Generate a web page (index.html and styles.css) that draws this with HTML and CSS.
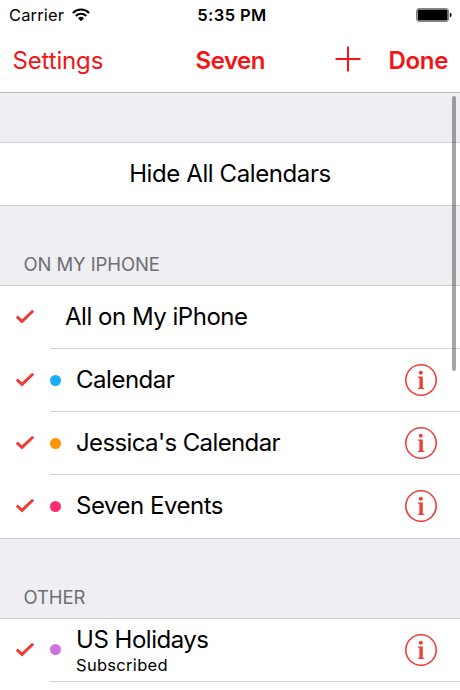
FILE: index.html
```
<!DOCTYPE html>
<html>

<head>
  <meta charset="utf-8">
  <title>Seven</title>
  <link rel="stylesheet" href="styles.css">
</head>

<body>
  <svg class="defs" width="0" height="0">
    <symbol id="check" viewBox="0 0 20 16">
      <path d="M1.8 7.6 L7 12.4 L18.2 1.8" fill="none" stroke="#f23a34" stroke-width="2.9"/>
    </symbol>
    <symbol id="info" viewBox="0 0 34 34">
      <circle cx="17" cy="17" r="15.2" fill="none" stroke="#ee3e38" stroke-width="1.6"/>
      <circle cx="16.8" cy="9.7" r="2" fill="#ee3e38"/>
      <path d="M14 13.6 H18.8 V24.8 L20.3 25.1 V26.1 H13.9 V25.1 L15.4 24.8 V15 L14 14.6 Z" fill="#ee3e38"/>
    </symbol>
  </svg>

  <header class="header">
    <div class="status">
      <div class="carrier">
        <span>Carrier</span>
        <svg class="wifi" width="18" height="14" viewBox="0 0 18 14">
          <g fill="none" stroke="#000" stroke-width="2.1">
            <path d="M0.9 4.9 A11.5 11.5 0 0 1 17.1 4.9"/>
            <path d="M3.8 7.9 A7.4 7.4 0 0 1 14.2 7.9"/>
          </g>
          <path d="M9 13.2 L6 10.2 A4.3 4.3 0 0 1 12 10.2 Z"/>
        </svg>
      </div>
      <div class="time">5:35 PM</div>
      <svg class="battery" width="36" height="14" viewBox="0 0 36 14">
        <rect x="0.6" y="0.6" width="32" height="12.8" rx="2.2" fill="none" stroke="#777" stroke-width="1"/>
        <rect x="1.6" y="1.6" width="30" height="10.8" rx="1.2"/>
        <path d="M33.9 4.6 Q35.6 5.2 35.6 7 Q35.6 8.8 33.9 9.4 Z"/>
      </svg>
    </div>
    <div class="nav">
      <a class="settings">Settings</a>
      <h1 class="title">Seven</h1>
      <div class="actions">
        <svg class="add" width="26" height="26" viewBox="0 0 26 26">
          <path d="M0.5 13 H25.5 M13 0.5 V25.5" stroke="#f51414" stroke-width="2"/>
        </svg>
        <a class="done">Done</a>
      </div>
    </div>
  </header>

  <div class="content">
    <div class="list first">
      <div class="row button"><span class="name">Hide All Calendars</span></div>
    </div>

    <h2 class="group">ON MY IPHONE</h2>
    <div class="list phone">
      <div class="row">
        <svg class="check"><use href="#check"/></svg>
        <div class="cell all"><span class="name">All on My iPhone</span></div>
      </div>
      <div class="row">
        <svg class="check"><use href="#check"/></svg>
        <div class="cell">
          <i class="dot blue"></i>
          <span class="name">Calendar</span>
          <svg class="info"><use href="#info"/></svg>
        </div>
      </div>
      <div class="row">
        <svg class="check"><use href="#check"/></svg>
        <div class="cell">
          <i class="dot orange"></i>
          <span class="name tight">Jessica's Calendar</span>
          <svg class="info"><use href="#info"/></svg>
        </div>
      </div>
      <div class="row">
        <svg class="check"><use href="#check"/></svg>
        <div class="cell">
          <i class="dot pink"></i>
          <span class="name">Seven Events</span>
          <svg class="info"><use href="#info"/></svg>
        </div>
      </div>
    </div>

    <h2 class="group">OTHER</h2>
    <div class="list other">
      <div class="row">
        <svg class="check"><use href="#check"/></svg>
        <div class="cell">
          <i class="dot purple"></i>
          <div class="text">
            <span class="name">US Holidays</span>
            <small class="sub">Subscribed</small>
          </div>
          <svg class="info"><use href="#info"/></svg>
        </div>
      </div>
    </div>
    <div class="scrollbar"></div>
  </div>
</body>

</html>
```
FILE: styles.css
```
* {
  box-sizing: border-box;
}

body {
  margin: 0;
  height: 690px;
  overflow: hidden;
  background: #fff;
  color: #000;
  font-family: Inter, "Liberation Sans", sans-serif;
  font-size: 24px;
  white-space: nowrap;
}

svg {
  display: block;
  flex: none;
}

.defs {
  position: absolute;
}

.header {
  height: 93px;
  border-bottom: 1px solid #b9b9bd;
}

.status {
  display: grid;
  grid-template-columns: 1fr auto 1fr;
  align-items: center;
  height: 30px;
  padding: 0 8px 0 9px;
  font-size: 16.5px;
}

.carrier {
  display: flex;
  align-items: center;
  gap: 8px;
  letter-spacing: 0.15px;
}

.time {
  padding-left: 3px;
  font-weight: 600;
  letter-spacing: 0.4px;
}

.battery {
  justify-self: end;
}

.nav {
  display: grid;
  grid-template-columns: 1fr auto 1fr;
  align-items: center;
  height: 62px;
  padding: 0 12px 2px 12.5px;
  color: #f51414;
  letter-spacing: -0.15px;
}

.title {
  margin: 0;
  font-size: 24px;
  font-weight: 600;
  letter-spacing: -0.5px;
}

.actions {
  display: flex;
  align-items: center;
  justify-content: flex-end;
  gap: 28px;
}

.add {
  margin-top: -2px;
}

.done {
  font-weight: 600;
  letter-spacing: -0.35px;
}

.content {
  position: relative;
  display: flex;
  flex-direction: column;
  height: 597px;
  padding-top: 49px;
  background: #efeef3;
}

.list {
  background: #fff;
  border-top: 1px solid #d0d0d3;
  border-bottom: 1px solid #d0d0d3;
}

.other {
  flex: 1;
  border-bottom: 0;
}

.row {
  display: flex;
  align-items: center;
  height: 63px;
  padding-left: 15px;
}

.first .row {
  height: 62px;
}

.button {
  justify-content: center;
  padding: 0;
}

.button .name {
  letter-spacing: -0.4px;
}

.check {
  width: 20px;
  height: 16px;
  margin: 0 15px 1px 0;
}

.cell {
  display: flex;
  flex: 1;
  align-items: center;
  height: 100%;
  padding-right: 22px;
  border-bottom: 1px solid #d3d3d6;
}

.phone .row:last-child .cell {
  border-bottom: 0;
  padding-bottom: 1px;
}

.other .cell {
  padding-bottom: 1px;
}

.all {
  padding-left: 15px;
}

.name {
  padding-bottom: 2px;
  letter-spacing: -0.48px;
}

.tight {
  letter-spacing: -0.62px;
}

.dot {
  width: 11px;
  height: 11px;
  margin-right: 15px;
  border-radius: 50%;
}

.blue {
  background: #1badf8;
}

.orange {
  background: #ff9500;
}

.pink {
  background: #ff2d6f;
}

.purple {
  background: #cc73e1;
}

.info {
  width: 34px;
  height: 34px;
  margin-left: auto;
}

.text {
  display: flex;
  flex-direction: column;
  padding-top: 2px;
}

.text .name {
  padding: 0;
  line-height: 28px;
}

.sub {
  font-size: 16.5px;
  line-height: 22px;
  letter-spacing: 0.3px;
}

.group {
  height: 79px;
  margin: 0;
  padding: 47px 0 0 23.5px;
  color: #6d6d72;
  font-size: 18.5px;
  font-weight: 400;
  line-height: 22px;
  letter-spacing: -0.1px;
}

.scrollbar {
  position: absolute;
  top: 3px;
  right: 4px;
  width: 4px;
  height: 275px;
  border-radius: 2px;
  background: rgba(0, 0, 0, .35);
}
```
